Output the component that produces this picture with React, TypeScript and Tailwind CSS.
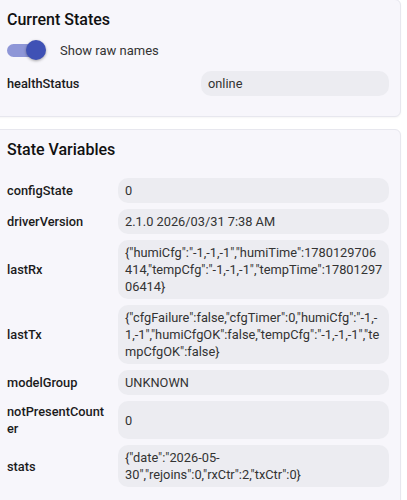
import React from "react";

const stateVariables: [string, string][] = [
  ["configState", "0"],
  ["driverVersion", "2.1.0 2026/03/31 7:38 AM"],
  [
    "lastRx",
    '{"humiCfg":"-1,-1,-1","humiTime":1780129706414,"tempCfg":"-1,-1,-1","tempTime":1780129706414}',
  ],
  [
    "lastTx",
    '{"cfgFailure":false,"cfgTimer":0,"humiCfg":"-1,-1,-1","humiCfgOK":false,"tempCfg":"-1,-1,-1","tempCfgOK":false}',
  ],
  ["modelGroup", "UNKNOWN"],
  ["notPresentCounter", "0"],
  ["stats", '{"date":"2026-05-30","rejoins":0,"rxCtr":2,"txCtr":0}'],
];

function Value({ children }: { children: React.ReactNode }) {
  return (
    <div className="flex items-center rounded-[10px] bg-[#ececf1] py-[4px] pl-[7px] pr-[6px] text-[12.8px] leading-[17px] text-[#333] [overflow-wrap:anywhere]">
      <span className="min-w-0">{children}</span>
    </div>
  );
}

function Label({ children }: { children: React.ReactNode }) {
  return (
    <div className="self-center py-[2px] text-[12.8px] leading-[17px] font-medium text-[#1b1b1b] [overflow-wrap:anywhere]">
      {children}
    </div>
  );
}

function Card({ title, children, className }: { title: string; children: React.ReactNode; className?: string }) {
  return (
    <section
      className={
        "ml-[-6px] mr-[6px] rounded-[6px] border border-[#e7e7ee] bg-[#f7f6fb] pl-[12px] pr-[11px] pt-[8px] shadow-[0_1px_2px_rgba(0,0,0,0.04)] " +
        (className ?? "")
      }
    >
      <h2 className="text-[16px] leading-[24px] font-medium text-[#111]">{title}</h2>
      {children}
    </section>
  );
}

export default function App() {
  return (
    <div className="h-[500px] w-[407px] overflow-hidden bg-white font-['Roboto','Liberation_Sans',sans-serif]">
      <Card title="Current States" className="mt-[-1px] pb-[20px]">
        <div className="mt-[8px] flex items-center">
          <div className="relative h-[20px] w-[39px] shrink-0">
            <div className="absolute left-0 top-[3.5px] h-[13px] w-[30px] rounded-full bg-[#8e96d7]" />
            <div className="absolute left-[19px] top-0 h-[20px] w-[20px] rounded-full bg-[#3f51b5] shadow-[0_1px_3px_rgba(0,0,0,0.35)]" />
          </div>
          <span className="ml-[14px] text-[13px] leading-[17px] text-[#333]">Show raw names</span>
        </div>
        <div className="mt-[11px] grid grid-cols-2 gap-x-[6px]">
          <Label>healthStatus</Label>
          <Value>online</Value>
        </div>
      </Card>

      <Card title="State Variables" className="mt-[12px] pb-[20px]">
        <div className="mt-[16px] grid grid-cols-[100px_1fr] gap-x-[11px] gap-y-[6px]">
          {stateVariables.map(([name, value]) => (
            <React.Fragment key={name}>
              <Label>{name}</Label>
              <Value>{value}</Value>
            </React.Fragment>
          ))}
        </div>
      </Card>
    </div>
  );
}
